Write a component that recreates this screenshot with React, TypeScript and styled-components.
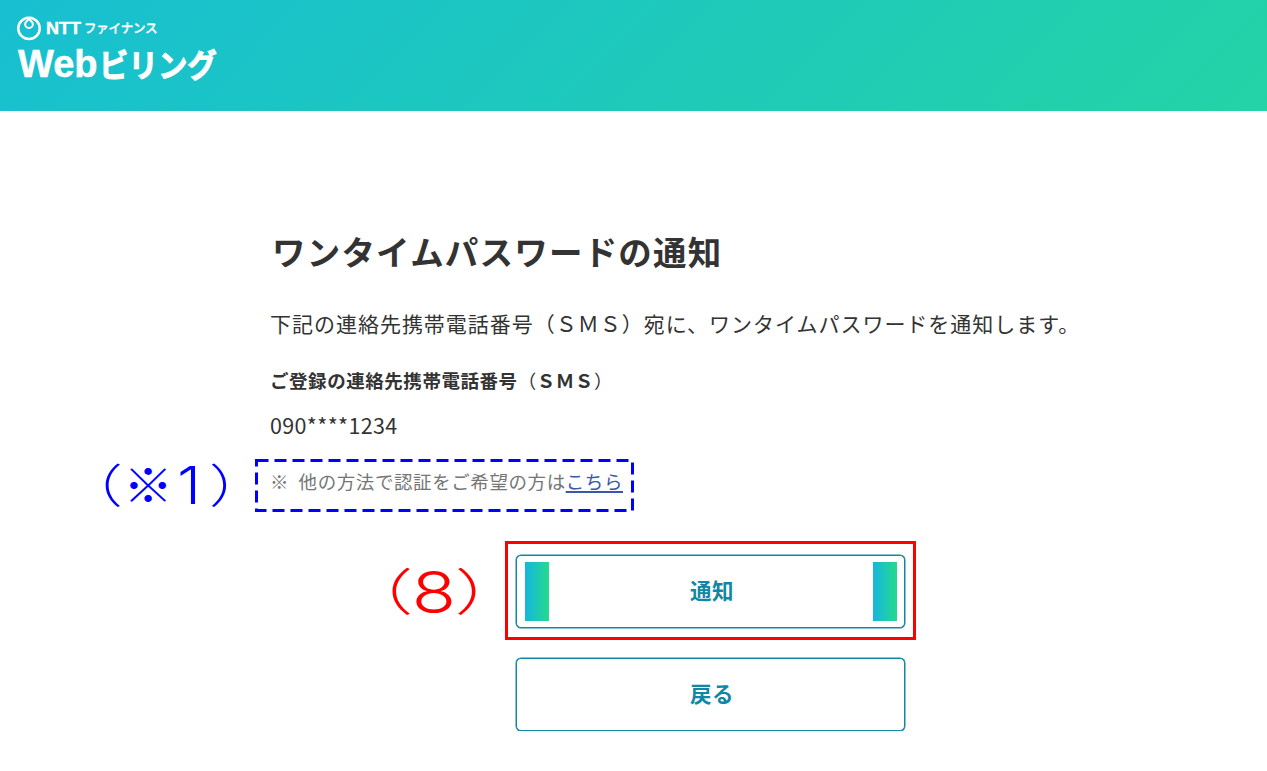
import React from 'react'
import styled, { createGlobalStyle } from 'styled-components'

const GlobalStyle = createGlobalStyle`
  body {
    margin: 0;
    background: #fff;
    color: #333;
    font-family: 'Noto Sans CJK JP', 'Noto Sans', sans-serif;
  }
`

const Header = styled.header`
  height: 111px;
  box-sizing: border-box;
  padding: 15px 16px 0;
  color: #fff;
  background: linear-gradient(135deg, #18bfd1 0%, #24d3a6 100%);
`

const Company = styled.div`
  display: flex;
  align-items: center;
  height: 26px;
`

const CompanyMark = styled.svg`
  width: 26px;
  height: 26px;
`

const CompanyInitials = styled.span`
  margin-left: 4px;
  width: 36px;
  font: 700 17px/26px 'Liberation Sans', sans-serif;
  -webkit-text-stroke: 0.4px #fff;
  transform: translateY(1px) scaleX(1.06);
  transform-origin: left;
`

const CompanyName = styled.span`
  margin-left: 2px;
  font-size: 12.5px;
  font-weight: 500;
  line-height: 26px;
  letter-spacing: -0.2px;
  -webkit-text-stroke: 0.3px #fff;
`

const ServiceName = styled.div`
  display: flex;
  align-items: baseline;
  margin-left: 2px;
  font-weight: 700;
  line-height: 44px;
  white-space: nowrap;
`

const ServiceLatin = styled.span`
  font-family: 'Liberation Sans', sans-serif;
  font-size: 38px;
  -webkit-text-stroke: 0.5px #fff;
`

const ServiceKana = styled.span`
  margin-left: 1px;
  font-size: 32px;
  -webkit-text-stroke: 0.9px #fff;
  transform: scaleX(0.92);
  transform-origin: left;
`

const Main = styled.main`
  display: flex;
  flex-direction: column;
  padding: 115px 0 0 270px;
`

const Title = styled.h1`
  margin: 0 0 0 2px;
  height: 50px;
  font-size: 33.5px;
  font-weight: 700;
  line-height: 49px;
  letter-spacing: 1.2px;
`

const Lead = styled.p`
  margin: 31px 0 0;
  font-size: 21px;
  line-height: 32px;
  letter-spacing: 0.98px;
`

const Label = styled.h2`
  margin: 25px 0 0;
  font-size: 18.5px;
  font-weight: 700;
  line-height: 32px;
  letter-spacing: 0.55px;
`

const LabelParen = styled.span`
  font-weight: 400;
`

const Phone = styled.p`
  margin: 12px 0 0;
  font-size: 21.5px;
  line-height: 34px;
  letter-spacing: 0.35px;
`

const NoteBox = styled.div`
  position: relative;
  display: flex;
  box-sizing: border-box;
  width: 379px;
  height: 53px;
  margin: 17px 0 0 -15px;
  padding: 6px 0 0 15px;
`

const DashedFrame = styled.svg`
  position: absolute;
  inset: 0;
`

const Note = styled.p`
  margin: 0;
  color: #767676;
  font-size: 18.5px;
  line-height: 32px;
  letter-spacing: 0.58px;
  white-space: nowrap;
`

const NoteMark = styled.span`
  margin-right: 9.5px;
`

const NoteLink = styled.a`
  color: #3b57a8;
  text-decoration: underline;
  text-decoration-thickness: 1.5px;
  text-underline-offset: 2px;
`

const Callout = styled.span<{ $color: string; $left: number; $top: number; $size: number; $gap: number }>`
  position: absolute;
  left: ${({ $left }) => $left}px;
  top: ${({ $top }) => $top}px;
  display: flex;
  gap: ${({ $gap }) => $gap}px;
  color: ${({ $color }) => $color};
  font-size: ${({ $size }) => $size}px;
  font-weight: 300;
  line-height: 60px;
  white-space: nowrap;
`

const CalloutGlyph = styled.span<{ $width: number; $stretch?: number }>`
  display: flex;
  justify-content: center;
  width: ${({ $width }) => $width}px;
  transform: scaleX(${({ $stretch = 1 }) => $stretch});
`

const CalloutDigit = styled(CalloutGlyph)<{ $size: number }>`
  font-family: Inter, sans-serif;
  font-size: ${({ $size }) => $size}px;
  transform: translateY(4px) scaleX(${({ $stretch = 1 }) => $stretch});
`

const ActionFrame = styled.div`
  position: relative;
  box-sizing: border-box;
  width: 411px;
  height: 99px;
  margin: 29px 0 0 235px;
  padding: 11px 8px;
  border: 3px solid #f00;
`

const Button = styled.button`
  display: flex;
  align-items: center;
  justify-content: space-between;
  box-sizing: border-box;
  width: 389px;
  height: 73px;
  padding: 0 7px 0 8px;
  border: 1px solid #1087a3;
  border-radius: 5px;
  box-shadow: 0 0 0 0.5px #1087a3;
  background: #fff;
  color: #1087a3;
  font-family: inherit;
  font-size: 21.5px;
  font-weight: 700;
  letter-spacing: 0.5px;
`

const ButtonText = styled.span`
  flex: 1;
  padding: 0 0 4px 2px;
  text-align: center;
`

const GradientBar = styled.span`
  width: 24px;
  height: 59px;
  background: linear-gradient(90deg, #14b6df, #26da8c);
`

const BackRow = styled.div`
  margin: 18px 0 0 246px;
`

const App: React.FC = () => {
  return (
    <>
      <GlobalStyle />
      <Header>
        <Company>
          <CompanyMark viewBox="0 0 26 26" fill="none" stroke="#fff">
            <circle cx="13" cy="13.4" r="10.7" strokeWidth="2.5" />
            <path
              strokeWidth="2"
              d="M9.200 3c2.400-.6 4.200.2 4.800 1.800.6 1.500 2.900 2 2.900 4.400a3.900 3.700 0 0 1-7.800 0c0-2.400 2.300-2.900 2.900-4.400.6-1.600 2.400-2.400 4.800-1.800"
            />
          </CompanyMark>
          <CompanyInitials>NTT</CompanyInitials>
          <CompanyName>ファイナンス</CompanyName>
        </Company>
        <ServiceName>
          <ServiceLatin>Web</ServiceLatin>
          <ServiceKana>ビリング</ServiceKana>
        </ServiceName>
      </Header>
      <Main>
        <Title>ワンタイムパスワードの通知</Title>
        <Lead>下記の連絡先携帯電話番号（ＳＭＳ）宛に、ワンタイムパスワードを通知します。</Lead>
        <Label>
          ご登録の連絡先携帯電話番号<LabelParen>（</LabelParen>ＳＭＳ<LabelParen>）</LabelParen>
        </Label>
        <Phone>090****1234</Phone>
        <NoteBox>
          <DashedFrame width="379" height="53" fill="none">
            <rect x="1.5" y="1.5" width="376" height="50" stroke="#00f" strokeWidth="3" strokeDasharray="12 6" />
          </DashedFrame>
          <Note>
            <NoteMark>※</NoteMark>他の方法で認証をご希望の方は<NoteLink href="#">こちら</NoteLink>
          </Note>
          <Callout $color="#00f" $left={-185} $top={-7} $size={46} $gap={9}>
            <CalloutGlyph $width={46} $stretch={1.3}>（</CalloutGlyph>
            <CalloutGlyph $width={46} $stretch={1.08}>※</CalloutGlyph>
            <CalloutDigit $width={18} $size={52} $stretch={1.15}>1</CalloutDigit>
            <CalloutGlyph $width={64} $stretch={1.3}>）</CalloutGlyph>
          </Callout>
        </NoteBox>
        <ActionFrame>
          <Button type="button">
            <GradientBar />
            <ButtonText>通知</ButtonText>
            <GradientBar />
          </Button>
          <Callout $color="#f00" $left={-156} $top={14} $size={50} $gap={13}>
            <CalloutGlyph $width={50} $stretch={1.45}>（</CalloutGlyph>
            <CalloutDigit $width={38} $size={58} $stretch={1.25}>8</CalloutDigit>
            <CalloutGlyph $width={50} $stretch={1.45}>）</CalloutGlyph>
          </Callout>
        </ActionFrame>
        <BackRow>
          <Button type="button">
            <ButtonText>戻る</ButtonText>
          </Button>
        </BackRow>
      </Main>
    </>
  )
}

export default App
